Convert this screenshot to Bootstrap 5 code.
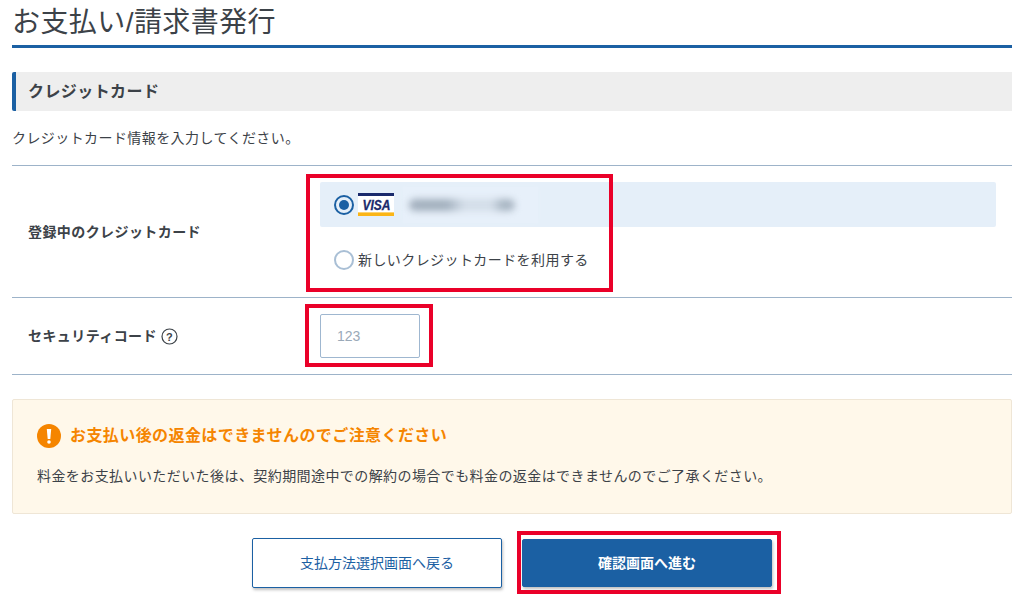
<!DOCTYPE html>
<html lang="ja">
  <head>
    <meta charset="UTF-8" />
    <meta name="viewport" content="width=device-width, initial-scale=1.0" />
    <title>お支払い/請求書発行</title>
    <link
      rel="stylesheet"
      href="https://cdn.jsdelivr.net/npm/bootstrap@5.3.3/dist/css/bootstrap.min.css"
    />
    <style>
      body {
        font-family: "Liberation Sans", "Noto Sans CJK JP", sans-serif;
        color: #3c4248;
        font-size: 14px;
        letter-spacing: 0.03em;
        overflow: hidden;
      }
      .page-wrap {
        position: relative;
        height: 608px;
        padding: 0 11px 0 12px;
      }
      .page-title {
        font-size: 28px;
        font-weight: 400;
        line-height: 36px;
        padding: 5px 0 4px;
        margin: 0 0 24px;
        border-bottom: 3px solid #1b60a3;
      }
      .section-head {
        height: 39px;
        line-height: 40px;
        background: #eeeeee;
        border-left: 4px solid #1b60a3;
        border-radius: 2px 0 0 2px;
        padding-left: 12px;
        font-size: 16px;
        font-weight: 700;
        margin-bottom: 18px;
      }
      .section-lead {
        line-height: 18px;
        margin-bottom: 18px;
      }
      .form-rows {
        border-top: 1px solid #9db3c9;
      }
      .form-line {
        display: flex;
        border-bottom: 1px solid #9db3c9;
      }
      .line-card {
        height: 132px;
      }
      .line-code {
        height: 77px;
      }
      .line-label {
        width: 308px;
        padding-left: 16px;
        padding-top: 1px;
        font-weight: 700;
      }
      .line-value {
        flex: 1;
        padding-right: 16px;
      }
      .card-picked {
        height: 45px;
        margin-top: 16px;
        padding-left: 14px;
        background: #e5eff9;
        border-radius: 2px;
      }
      .card-new {
        height: 44px;
        margin-top: 11px;
        padding-left: 14px;
      }
      .radio-dot {
        width: 20px;
        height: 20px;
        border-radius: 50%;
        border: 2px solid #a9bfd5;
        background: #fff;
        margin-right: 4px;
        flex: none;
      }
      .radio-on {
        border-color: #1b60a3;
        padding: 3px;
        background: #1b60a3 content-box;
      }
      .visa-mark {
        letter-spacing: 0;
      }
      .masked-patch {
        width: 135px;
        height: 36px;
        margin-left: 9px;
        padding-left: 6px;
        background: #e7f0fa;
        box-shadow: 0 0 4px #e7f0fa;
      }
      .masked-num {
        width: 106px;
        height: 12px;
        border-radius: 6px;
        background: linear-gradient(90deg, #a3b0be 0 36%, #d3dde8 52% 78%, #a9b6c3 88% 100%);
        filter: blur(3.5px);
      }
      .code-input {
        width: 100px;
        height: 44px;
        margin-top: 16px;
        padding: 0 16px;
        font-size: 14px;
        border: 1px solid #9fb7d0;
        border-radius: 2px;
      }
      .code-input::placeholder {
        color: #9aa9b8;
      }
      .notice-box {
        height: 115px;
        margin-top: 24px;
        padding: 24px 24px 0;
        background: #fff8ea;
        border: 1px solid #efe6d6;
        border-radius: 2px;
      }
      .notice-title {
        color: #f58500;
        font-size: 16px;
        font-weight: 700;
        line-height: 24px;
        margin-bottom: 18px;
        gap: 9px;
      }
      .notice-text {
        line-height: 20px;
      }
      .btn-row {
        margin-top: 24px;
        gap: 20px;
      }
      .btn-pay {
        width: 250px;
        height: 50px;
        border-radius: 2px;
        font-size: 14px;
        box-shadow: 1px 2px 3px rgba(0, 0, 0, 0.25);
      }
      .btn-back {
        background: #fff;
        border: 1px solid #1b60a3;
        color: #1b60a3;
      }
      .btn-next {
        height: 48px;
        background: #1b60a3;
        border: 1px solid #1b60a3;
        color: #fff;
        font-weight: 700;
      }
      .red-frame {
        position: absolute;
        border: 4px solid #ea0029;
      }
      .frame-card {
        left: 306px;
        top: 174px;
        width: 307px;
        height: 118px;
      }
      .frame-code {
        left: 305px;
        top: 304px;
        width: 128px;
        height: 63px;
      }
      .frame-next {
        left: 517px;
        top: 531px;
        width: 264px;
        height: 63px;
      }
    </style>
  </head>
  <body>
    <div class="page-wrap">
      <h1 class="page-title">お支払い/請求書発行</h1>
      <div class="section-head">クレジットカード</div>
      <p class="section-lead">クレジットカード情報を入力してください。</p>

      <div class="form-rows">
        <div class="form-line line-card">
          <div class="line-label d-flex align-items-center">登録中のクレジットカード</div>
          <div class="line-value">
            <div class="card-picked d-flex align-items-center">
              <span class="radio-dot radio-on"></span>
              <svg class="visa-mark" width="36" height="23" viewBox="0 0 36 23">
                <rect width="36" height="23" fill="#fff" />
                <rect width="36" height="3" fill="#1a2a6c" />
                <rect y="19.4" width="36" height="3.6" fill="#fbb516" />
                <text x="4.5" y="16.6" textLength="28" lengthAdjust="spacingAndGlyphs" font-family="Liberation Sans" font-size="14" font-weight="700" font-style="italic" fill="#1a2a6c" stroke="#1a2a6c" stroke-width="0.3">VISA</text>
              </svg>
              <span class="masked-patch d-flex align-items-center">
                <span class="masked-num"></span>
              </span>
            </div>
            <div class="card-new d-flex align-items-center">
              <span class="radio-dot"></span>
              <span>新しいクレジットカードを利用する</span>
            </div>
          </div>
        </div>
        <div class="form-line line-code">
          <div class="line-label d-flex align-items-center gap-1">
            セキュリティコード
            <svg width="17" height="17" viewBox="0 0 17 17">
              <circle cx="8.5" cy="8.5" r="7.5" fill="none" stroke="#3c4248" stroke-width="1.2" />
              <text x="8.5" y="12.5" text-anchor="middle" font-family="Liberation Sans" font-size="11" fill="#3c4248">?</text>
            </svg>
          </div>
          <div class="line-value">
            <input class="code-input d-block" type="text" placeholder="123" />
          </div>
        </div>
      </div>

      <div class="notice-box">
        <div class="notice-title d-flex align-items-center">
          <svg width="24" height="24" viewBox="0 0 24 24">
            <circle cx="12" cy="12" r="12" fill="#f58500" />
            <path d="M9.8 5h4.4l-0.9 10h-2.6z" fill="#fff" />
            <circle cx="12" cy="18" r="1.8" fill="#fff" />
          </svg>
          お支払い後の返金はできませんのでご注意ください
        </div>
        <p class="notice-text mb-0">料金をお支払いいただいた後は、契約期間途中での解約の場合でも料金の返金はできませんのでご了承ください。</p>
      </div>

      <div class="btn-row d-flex justify-content-center align-items-center">
        <button type="button" class="btn btn-pay btn-back">支払方法選択画面へ戻る</button>
        <button type="button" class="btn btn-pay btn-next">確認画面へ進む</button>
      </div>

      <div class="red-frame frame-card"></div>
      <div class="red-frame frame-code"></div>
      <div class="red-frame frame-next"></div>
    </div>

    <script src="https://cdn.jsdelivr.net/npm/bootstrap@5.3.3/dist/js/bootstrap.bundle.min.js"></script>
  </body>
</html>
